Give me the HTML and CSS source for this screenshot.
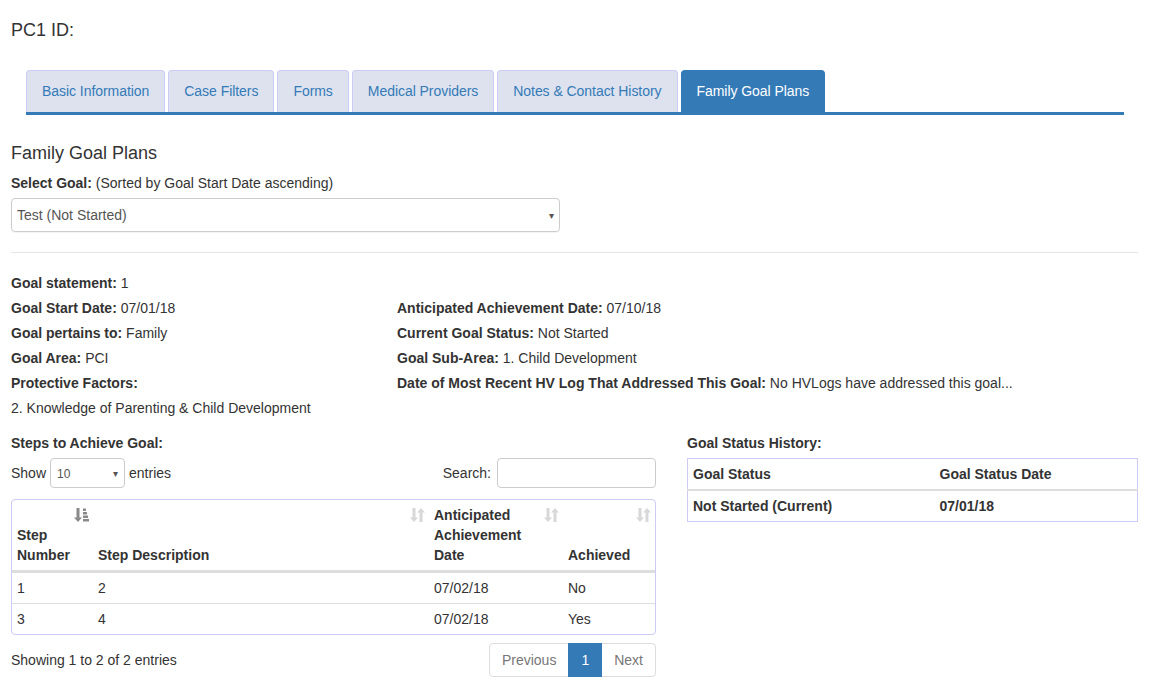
FILE: index.html
```html
<!DOCTYPE html>
<html>
<head>
<meta charset="utf-8">
<link rel="stylesheet" href="styles.css">
</head>
<body>
<div class="page">
  <h3 class="pc-id">PC1 ID:</h3>

  <ul class="tabs">
    <li class="tab">Basic Information</li>
    <li class="tab">Case Filters</li>
    <li class="tab">Forms</li>
    <li class="tab">Medical Providers</li>
    <li class="tab">Notes &amp; Contact History</li>
    <li class="tab active">Family Goal Plans</li>
  </ul>

  <h4 class="section-title">Family Goal Plans</h4>
  <div class="select-label"><b>Select Goal:</b> (Sorted by Goal Start Date ascending)</div>
  <div class="goal-select">
    <span>Test (Not Started)</span>
    <span class="caret">&#9662;</span>
  </div>

  <hr class="divider">

  <div class="info-grid">
    <div><b>Goal statement:</b> 1</div>
    <div></div>
    <div><b>Goal Start Date:</b> 07/01/18</div>
    <div><b>Anticipated Achievement Date:</b> 07/10/18</div>
    <div><b>Goal pertains to:</b> Family</div>
    <div><b>Current Goal Status:</b> Not Started</div>
    <div><b>Goal Area:</b> PCI</div>
    <div><b>Goal Sub-Area:</b> 1. Child Development</div>
    <div><b>Protective Factors:</b></div>
    <div><b>Date of Most Recent HV Log That Addressed This Goal:</b> No HVLogs have addressed this goal...</div>
    <div>2. Knowledge of Parenting &amp; Child Development</div>
    <div></div>
  </div>

  <div class="bottom-row">
    <div class="steps-col">
      <div class="sub-title">Steps to Achieve Goal:</div>
      <div class="dt-controls">
        <div class="length">Show
          <div class="len-select"><span>10</span><span class="caret">&#9662;</span></div>
          entries</div>
        <div class="search">Search: <div class="search-input"></div></div>
      </div>
      <div class="table-wrap">
        <table class="steps">
          <colgroup>
            <col class="c1"><col class="c2"><col class="c3"><col class="c4">
          </colgroup>
          <thead>
            <tr>
              <th>Step Number
                <svg class="sort" viewBox="0 0 16 16" width="16" height="16"><path d="M2.5 1h3v9.5h2.5l-4 4.5-4-4.5h2.5z" fill="#8a8a8a"/><rect x="9" y="1.5" width="3" height="2.5" fill="#8a8a8a"/><rect x="9" y="5" width="4" height="2.5" fill="#8a8a8a"/><rect x="9" y="8.5" width="5" height="2.5" fill="#8a8a8a"/><rect x="9" y="12" width="6" height="2.5" fill="#8a8a8a"/></svg>
              </th>
              <th>Step Description
                <svg class="sort" viewBox="0 0 16 16" width="16" height="16"><path d="M2.5 1h3v9.5h2.5l-4 4.5-4-4.5h2.5z" fill="#d8d8d8"/><path d="M12.5 15h-3V5.5H7l4-4.5 4 4.5h-2.5z" fill="#d8d8d8"/></svg>
              </th>
              <th>Anticipated Achievement Date
                <svg class="sort" viewBox="0 0 16 16" width="16" height="16"><path d="M2.5 1h3v9.5h2.5l-4 4.5-4-4.5h2.5z" fill="#d8d8d8"/><path d="M12.5 15h-3V5.5H7l4-4.5 4 4.5h-2.5z" fill="#d8d8d8"/></svg>
              </th>
              <th>Achieved
                <svg class="sort" viewBox="0 0 16 16" width="16" height="16"><path d="M2.5 1h3v9.5h2.5l-4 4.5-4-4.5h2.5z" fill="#d8d8d8"/><path d="M12.5 15h-3V5.5H7l4-4.5 4 4.5h-2.5z" fill="#d8d8d8"/></svg>
              </th>
            </tr>
          </thead>
          <tbody>
            <tr><td>1</td><td>2</td><td>07/02/18</td><td>No</td></tr>
            <tr><td>3</td><td>4</td><td>07/02/18</td><td>Yes</td></tr>
          </tbody>
        </table>
      </div>
      <div class="dt-footer">
        <div class="info">Showing 1 to 2 of 2 entries</div>
        <ul class="pager">
          <li class="pg disabled">Previous</li>
          <li class="pg current">1</li>
          <li class="pg disabled">Next</li>
        </ul>
      </div>
    </div>

    <div class="status-col">
      <div class="sub-title">Goal Status History:</div>
      <table class="status">
        <thead>
          <tr><th class="s1">Goal Status</th><th>Goal Status Date</th></tr>
        </thead>
        <tbody>
          <tr><td>Not Started (Current)</td><td>07/01/18</td></tr>
        </tbody>
      </table>
    </div>
  </div>
</div>
</body>
</html>
```

FILE: styles.css
```css
* { box-sizing: border-box; }
html, body { margin: 0; padding: 0; background: #fff; }
body {
  font-family: "Liberation Sans", Arial, Helvetica, sans-serif;
  font-size: 14px;
  line-height: 20px;
  color: #333;
}
.page { padding: 0 11px; }

.pc-id {
  margin: 20px 0 0;
  font-size: 18px;
  font-weight: normal;
  line-height: 20px;
}

.tabs {
  list-style: none;
  margin: 30px 14px 0 15px;
  padding: 0;
  display: flex;
  gap: 3px;
  border-bottom: 3px solid #337ab7;
}
.tab {
  padding: 10px 15px;
  line-height: 20px;
  color: #337ab7;
  background: #dde2ee;
  border: 1px solid #cbcbf5;
  border-bottom: none;
  border-radius: 4px 4px 0 0;
  height: 42px;
  letter-spacing: -0.05px;
}
.tab.active {
  background: #337ab7;
  border-color: #337ab7;
  color: #fff;
}

.section-title {
  margin: 28px 0 0;
  font-size: 18px;
  font-weight: normal;
  line-height: 20px;
}
.select-label { margin-top: 10px; }
.goal-select {
  position: relative;
  width: 549px;
  height: 34px;
  margin-top: 5px;
  border: 1px solid #ccc;
  border-radius: 4px;
  padding: 6px 5px;
  color: #555;
  box-shadow: 0 1px 1px rgba(0,0,0,0.05);
}
.caret {
  position: absolute;
  right: 5px;
  top: 7px;
  font-size: 10px;
  color: #555;
}

.divider {
  margin: 20px 0 18px;
  border: 0;
  border-top: 1px solid #e6e6e6;
}

.info-grid {
  display: grid;
  grid-template-columns: 386px 1fr;
  grid-auto-rows: 25px;
  line-height: 25px;
}

.bottom-row {
  display: flex;
  gap: 31px;
  margin-top: 12px;
  align-items: flex-start;
}
.steps-col { width: 645px; }
.status-col { flex: 1; }
.sub-title { font-weight: bold; line-height: 20px; }

.dt-controls {
  margin-top: 5px;
  display: flex;
  justify-content: space-between;
  align-items: center;
  height: 30px;
}
.length { display: flex; align-items: center; }
.len-select {
  position: relative;
  width: 75px;
  height: 30px;
  margin: 0 4px;
  border: 1px solid #ccc;
  border-radius: 4px;
  padding: 5px 6px;
  font-size: 12px;
  color: #555;
}
.len-select .caret { top: 5px; right: 6px; }
.search { display: flex; align-items: center; }
.search-input {
  width: 159px;
  height: 30px;
  margin-left: 6px;
  border: 1px solid #ccc;
  border-radius: 4px;
}

.table-wrap {
  margin-top: 11px;
  border: 1px solid #cbcbf5;
  border-radius: 4px;
  overflow: hidden;
}
table { border-collapse: collapse; width: 100%; }
.steps { table-layout: fixed; }
.c1 { width: 81px; }
.c2 { width: 336px; }
.c3 { width: 134px; }
.c4 { width: auto; }
.steps th {
  position: relative;
  text-align: left;
  vertical-align: bottom;
  padding: 5px 30px 5px 5px;
  border-bottom: 3px solid #ddd;
  line-height: 20px;
}
.steps th:first-child { padding-right: 10px; }
.sort {
  position: absolute;
  top: 7px;
  right: 3px;
}
.steps td {
  padding: 5px;
  line-height: 20px;
  border-top: 1px solid #ddd;
}
.steps tbody tr:first-child td { border-top: none; }

.dt-footer {
  margin-top: 8px;
  display: flex;
  justify-content: space-between;
  align-items: center;
}
.pager {
  list-style: none;
  margin: 0;
  padding: 0;
  display: flex;
}
.pg {
  padding: 6px 12px;
  line-height: 20px;
  height: 34px;
  border: 1px solid #ddd;
  margin-left: -1px;
  color: #777;
  background: #fff;
}
.pg:first-child { border-radius: 4px 0 0 4px; margin-left: 0; }
.pg:last-child { border-radius: 0 4px 4px 0; }
.pg.current {
  background: #337ab7;
  border-color: #337ab7;
  color: #fff;
  position: relative;
}

.status {
  margin-top: 5px;
  border: 1px solid #cbcbf5;
  table-layout: fixed;
}
.status .s1 { width: 247px; }
.status th, .status td {
  text-align: left;
  padding: 5px;
  line-height: 20px;
  font-weight: bold;
}
.status th { border-bottom: 2px solid #ddd; }
```
